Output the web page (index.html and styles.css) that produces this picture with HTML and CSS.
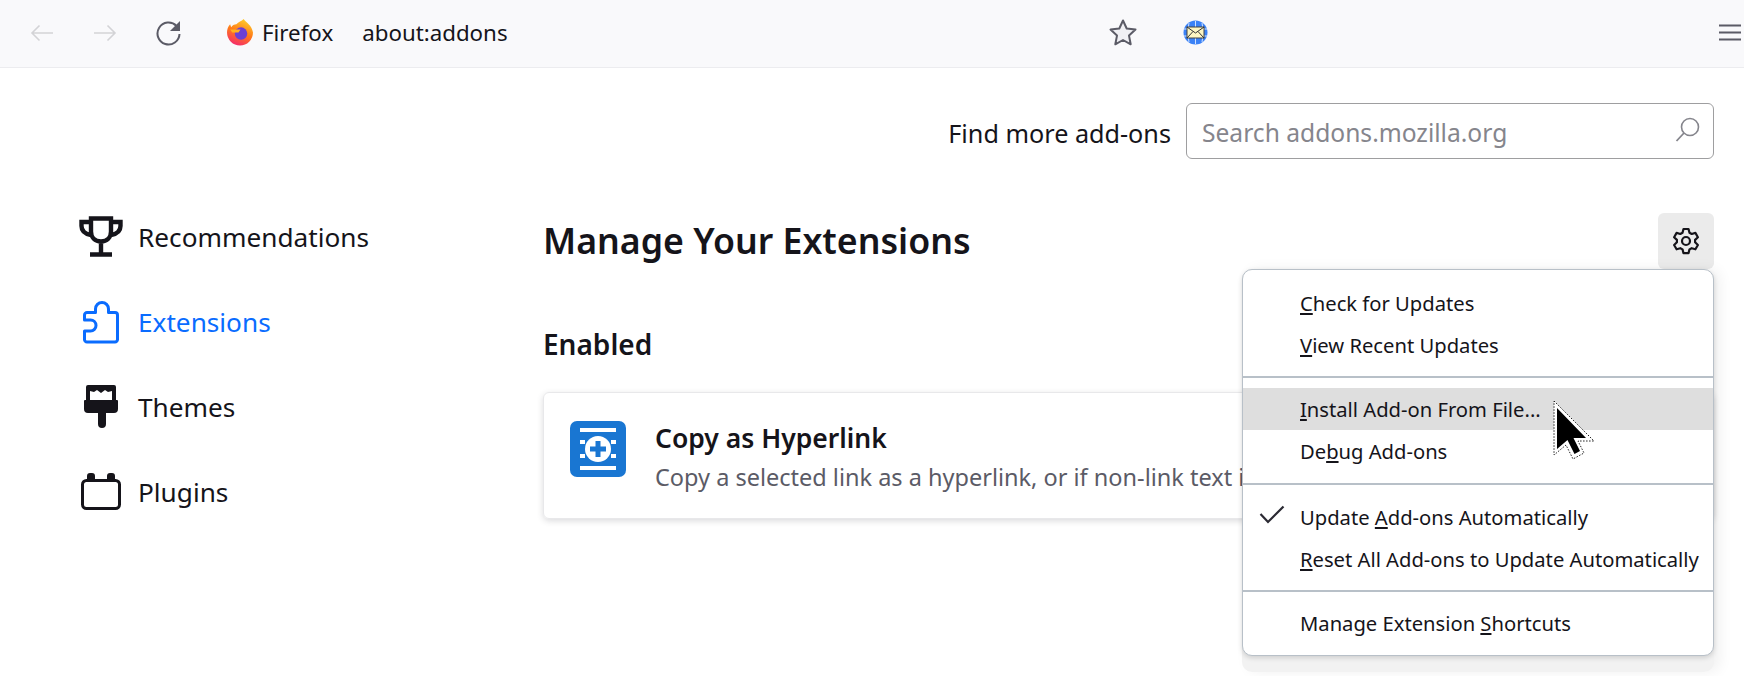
FILE: index.html
```html
<!DOCTYPE html>
<html lang="en">
<head>
    <meta charset="UTF-8">
    <title>Add-ons Manager</title>
    <link rel="stylesheet" href="styles.css">
</head>
<body>
    <header class="toolbar">
        <div class="nav-buttons">
            <svg width="24" height="18" viewBox="0 0 24 18"><path d="M23 9H2M9.5 1.5 2 9l7.5 7.5" fill="none" stroke="#d3d3d6" stroke-width="1.6"/></svg>
            <svg width="24" height="18" viewBox="0 0 24 18"><path d="M1 9h21M14.5 1.5 22 9l-7.5 7.5" fill="none" stroke="#d3d3d6" stroke-width="1.6"/></svg>
            <svg width="25" height="26" viewBox="0 0 25 26"><path d="M20.5 6A11 11 0 1 0 23.5 14" fill="none" stroke="#5b5b66" stroke-width="2"/><path d="M24 1v10H14z" fill="#5b5b66"/></svg>
        </div>
        <div class="urlbar">
            <svg width="26" height="27" viewBox="0 0 25 26">
                <defs>
                    <linearGradient id="fox" x1="0.7" y1="0" x2="0.3" y2="1">
                        <stop offset="0" stop-color="#ffd02e"/>
                        <stop offset="0.5" stop-color="#ff7a18"/>
                        <stop offset="1" stop-color="#f5286e"/>
                    </linearGradient>
                </defs>
                <path d="M16 0c2 3 8 6 9 13a12.5 12.5 0 1 1-25 0c0-3 1-6 3-8l1 3c1-2 3-3 5-3 2-2 5-3 7-5z" fill="url(#fox)"/>
                <circle cx="13.5" cy="14" r="6" fill="#6b3fd4"/>
                <path d="M3 10h10l-2 3H5z" fill="#ffb01f"/>
            </svg>
            <span class="identity">Firefox</span>
            <span class="address">about:addons</span>
        </div>
        <div class="toolbar-right">
            <svg width="28" height="27" viewBox="0 0 28 27"><path d="M14 1.5 17.7 9.5 26.5 10.6 20 16.6 21.7 25.3 14 21 6.3 25.3 8 16.6 1.5 10.6 10.3 9.5z" fill="#f0f0f4" stroke="#5b5b66" stroke-width="2" stroke-linejoin="round"/></svg>
            <svg width="25" height="25" viewBox="0 0 25 25">
                <circle cx="12.5" cy="12.5" r="12" fill="#3b82f6"/>
                <path d="M1 9h23M1 16h23M12.5 1v23M6 3q-3 9 0 19M19 3q3 9 0 19" stroke="#cfe2ff" fill="none"/>
                <rect x="4" y="7" width="17" height="11" fill="#fdf6c3" stroke="#444"/>
                <path d="M4 7l8.5 6L21 7M4 18l6-6.5M21 18l-6-6.5" fill="none" stroke="#333"/>
            </svg>
            <svg class="menu-icon" width="22" height="17" viewBox="0 0 22 17"><path d="M0 1.5h22M0 8.5h22M0 15.5h22" stroke="#5b5b66" stroke-width="2"/></svg>
        </div>
    </header>

    <div class="page">
        <div class="search-row">
            <label class="search-label" for="search">Find more add-ons</label>
            <div class="search-box">
                <input id="search" type="text" placeholder="Search addons.mozilla.org">
                <svg width="25" height="25" viewBox="0 0 25 25"><circle cx="15" cy="10" r="8.5" fill="none" stroke="#85858c" stroke-width="1.6"/><path d="M9 16 1.5 24" stroke="#85858c" stroke-width="1.8"/></svg>
            </div>
        </div>

        <div class="columns">
            <nav class="sidebar">
                <a class="side-item">
                    <span class="side-icon">
                        <svg width="44" height="41" viewBox="0 0 44 41"><path d="M12 2.5h20v13c0 6-4 10-10 10s-10-4-10-10zM12 6H2.5v4c0 5 4 8 9.500 9M32 6h9.5v4c0 5-4 8-9.500 9M22 25v13M11 38.500h22" fill="none" stroke="#15141a" stroke-width="4.400"/></svg>
                    </span>
                    Recommendations
                </a>
                <a class="side-item active">
                    <span class="side-icon">
                        <svg width="36" height="44" viewBox="0 0 36 44"><path d="M4 42a2.5 2.5 0 0 1-2.5-2.5V31h6a5 5 0 0 0 0-11h-6v-5A2.5 2.5 0 0 1 4 12.5h8.5V9a6.5 6.5 0 0 1 13 0v3.5H32a2.5 2.5 0 0 1 2.5 2.5v24.5A2.5 2.5 0 0 1 32 42z" fill="none" stroke="#0a6cff" stroke-width="3" stroke-linejoin="round"/></svg>
                    </span>
                    Extensions
                </a>
                <a class="side-item">
                    <span class="side-icon">
                        <svg width="34" height="43" viewBox="0 0 34 43"><path d="M4 0h26a2 2 0 0 1 2 2v13h1a1 1 0 0 1 1 1v8a4 4 0 0 1-4 4h-8v11a4 4 0 0 1-8 0V28H4a4 4 0 0 1-4-4v-8a1 1 0 0 1 1-1h1V2a2 2 0 0 1 2-2z" fill="#15141a"/><path d="M6 15V6l4 1 3-2 4 3 4-3 3 2 4-1v9z" fill="#fff"/></svg>
                    </span>
                    Themes
                </a>
                <a class="side-item">
                    <span class="side-icon">
                        <svg width="40" height="37" viewBox="0 0 40 37"><rect x="1.5" y="7.5" width="37" height="28" rx="4" fill="none" stroke="#15141a" stroke-width="3"/><path d="M6 9V3a3 3 0 0 1 3-3h2a3 3 0 0 1 3 3v6zM26 9V3a3 3 0 0 1 3-3h2a3 3 0 0 1 3 3v6z" fill="#15141a"/></svg>
                    </span>
                    Plugins
                </a>
            </nav>

            <main class="content">
                <div class="content-head">
                    <h1>Manage Your Extensions</h1>
                    <button class="gear-button">
                        <svg width="28" height="28" viewBox="0 0 28 28"><path d="M11.5 2h5l1 3.8 2.2 1.2 3.7-1.100 2.500 4.300-2.800 2.700v2.400l2.800 2.700-2.500 4.300-3.700-1.100-2.200 1.200-1 3.800h-5l-1-3.800-2.200-1.200-3.700 1.100-2.500-4.300 2.800-2.700v-2.400L2.100 10.200l2.500-4.300 3.700 1.100 2.200-1.200z" fill="none" stroke="#15141a" stroke-width="2.2" stroke-linejoin="round"/><circle cx="14" cy="14" r="4" fill="none" stroke="#15141a" stroke-width="2.2"/></svg>
                    </button>
                </div>
                <h2>Enabled</h2>
                <section class="card">
                    <svg class="addon-icon" width="56" height="56" viewBox="0 0 56 56">
                        <rect width="56" height="56" rx="7" fill="#1976d2"/>
                        <path d="M10 7h36v4H10zM10 45h36v4H10zM10 19h5v4h-5zM41 19h5v4h-5zM10 33h5v4h-5zM41 33h5v4h-5z" fill="#fff"/>
                        <circle cx="28" cy="28" r="13" fill="#fff"/>
                        <path d="M25.5 20h5v5.5H36v5h-5.5V36h-5v-5.5H20v-5h5.500z" fill="#1976d2"/>
                    </svg>
                    <div class="card-text">
                        <h3>Copy as Hyperlink</h3>
                        <p>Copy a selected link as a hyperlink, or if non-link text i</p>
                    </div>
                </section>
            </main>
        </div>
    </div>

    <div class="menu-backing"></div>
    <div class="gear-menu">
        <div class="menu-item"><u>C</u>heck for Updates</div>
        <div class="menu-item"><u>V</u>iew Recent Updates</div>
        <hr>
        <div class="menu-item hovered"><u>I</u>nstall Add-on From File...</div>
        <div class="menu-item">De<u>b</u>ug Add-ons</div>
        <hr class="sep-wide">
        <div class="menu-item">
            <svg class="check" width="26" height="19" viewBox="0 0 26 19"><path d="M1.5 9 9 17 24.5 1.5" fill="none" stroke="#2b2a33" stroke-width="2.2"/></svg>
            Update <u>A</u>dd-ons Automatically
        </div>
        <div class="menu-item"><u>R</u>eset All Add-ons to Update Automatically</div>
        <hr>
        <div class="menu-item">Manage Extension <u>S</u>hortcuts</div>
    </div>

    <svg class="cursor" width="42" height="60" viewBox="0 0 42 60">
        <path d="M1 1 41 41H25L31 53 20 59 13 45 1 55z" fill="#fff" stroke="#222" stroke-dasharray="1.5 1.5"/>
        <path d="M4 8 33 38H20.5L27 51 21.5 54 14.5 40 4 49z" fill="#000"/>
    </svg>
</body>
</html>
```

FILE: styles.css
```css
* {
    box-sizing: border-box;
}
html, body {
    height: 676px;
    overflow: hidden;
}
body {
    margin: 0;
    font-family: "Noto Sans", "Open Sans", sans-serif;
    color: #15141a;
    background-color: #fff;
    position: relative;
}

/* top bar */
.toolbar {
    display: flex;
    align-items: center;
    height: 68px;
    padding: 0 3px 2px 30px;
    background-color: #f9f9fb;
    border-bottom: 1px solid #ececef;
}
.nav-buttons {
    display: flex;
    align-items: center;
    gap: 39px;
}
.urlbar {
    display: flex;
    align-items: center;
    margin-left: 46px;
    font-size: 22.3px;
}
.identity {
    margin-left: 9px;
}
.address {
    margin-left: 29px;
}
.toolbar-right {
    display: flex;
    align-items: center;
    margin-left: auto;
    gap: 46px;
}
.menu-icon {
    margin-left: 465px;
}

/* page */
.page {
    padding: 35px 30px 0 79px;
}
.search-row {
    display: flex;
    justify-content: flex-end;
    align-items: center;
    gap: 15px;
}
.search-label {
    padding-top: 3px;
    font-size: 25.2px;
}
.search-box {
    display: flex;
    align-items: center;
    width: 528px;
    height: 56px;
    padding: 0 13px 0 15px;
    border: 1px solid #9e9ea0;
    border-radius: 6px;
}
.search-box svg {
    margin-bottom: 4px;
}
.search-box input {
    flex: 1;
    padding: 2px 0 0;
    border: none;
    outline: none;
    font: 24.6px "Noto Sans", "Open Sans", sans-serif;
}
.search-box input::placeholder {
    color: #85858c;
}

.columns {
    display: flex;
    margin-top: 35px;
}
.sidebar {
    display: flex;
    flex-direction: column;
    width: 464px;
}
.side-item {
    display: flex;
    align-items: center;
    height: 85px;
    font-size: 26.2px;
}
.side-item.active {
    color: #0a6cff;
}
.side-icon {
    display: flex;
    justify-content: center;
    width: 44px;
    margin-right: 15px;
}

.content {
    flex: 1;
    min-width: 0;
    padding-top: 19px;
}
.content-head {
    display: flex;
    justify-content: space-between;
    align-items: center;
    height: 56px;
}
h1 {
    margin: 0 0 2px;
    font-size: 35.7px;
    font-weight: 600;
}
.gear-button {
    display: flex;
    align-items: center;
    justify-content: center;
    width: 56px;
    height: 56px;
    padding: 0;
    border: none;
    border-radius: 6px;
    background-color: #ebebeb;
}
h2 {
    margin: 56px 0 29px;
    font-size: 28px;
    font-weight: 600;
    line-height: 38px;
}
.card {
    display: flex;
    align-items: flex-start;
    height: 127px;
    padding: 28px 26px;
    border: 1px solid #e8e8ea;
    border-radius: 6px;
    box-shadow: 0 2px 6px rgba(58, 57, 68, 0.18);
    overflow: hidden;
}
.addon-icon {
    flex: none;
}
.card-text {
    margin-left: 29px;
    min-width: 0;
}
h3 {
    margin: -1px 0 0;
    font-size: 26.5px;
    font-weight: 600;
    line-height: 36px;
    white-space: nowrap;
}
.card-text p {
    margin: 4px 0 0;
    font-size: 23.5px;
    line-height: 34px;
    color: #5b5b66;
    white-space: nowrap;
}

/* gear dropdown */
.menu-backing {
    position: absolute;
    left: 1242px;
    top: 269px;
    width: 472px;
    height: 403px;
    border-radius: 10px;
    background-color: #f2f2f2;
    box-shadow: 6px 0 14px rgba(0, 0, 0, 0.06);
}
.gear-menu {
    position: absolute;
    left: 1242px;
    top: 269px;
    width: 472px;
    height: 387px;
    padding-top: 12px;
    background-color: #fff;
    border: 1px solid #b8c0c8;
    border-radius: 10px;
    box-shadow: 0 2px 5px rgba(0, 0, 0, 0.15);
    font-size: 20.2px;
    color: #15141a;
}
.menu-item {
    position: relative;
    height: 42px;
    padding-left: 57px;
    line-height: 43px;
    white-space: nowrap;
}
.menu-item.hovered {
    background-color: #dedede;
}
.gear-menu hr {
    height: 2px;
    margin: 10px 0;
    border: none;
    background-color: #b8c0c8;
}
.gear-menu hr.sep-wide {
    margin: 11px 0;
}
.check {
    position: absolute;
    left: 16px;
    top: 9px;
}
.cursor {
    position: absolute;
    left: 1553px;
    top: 400px;
}
```
